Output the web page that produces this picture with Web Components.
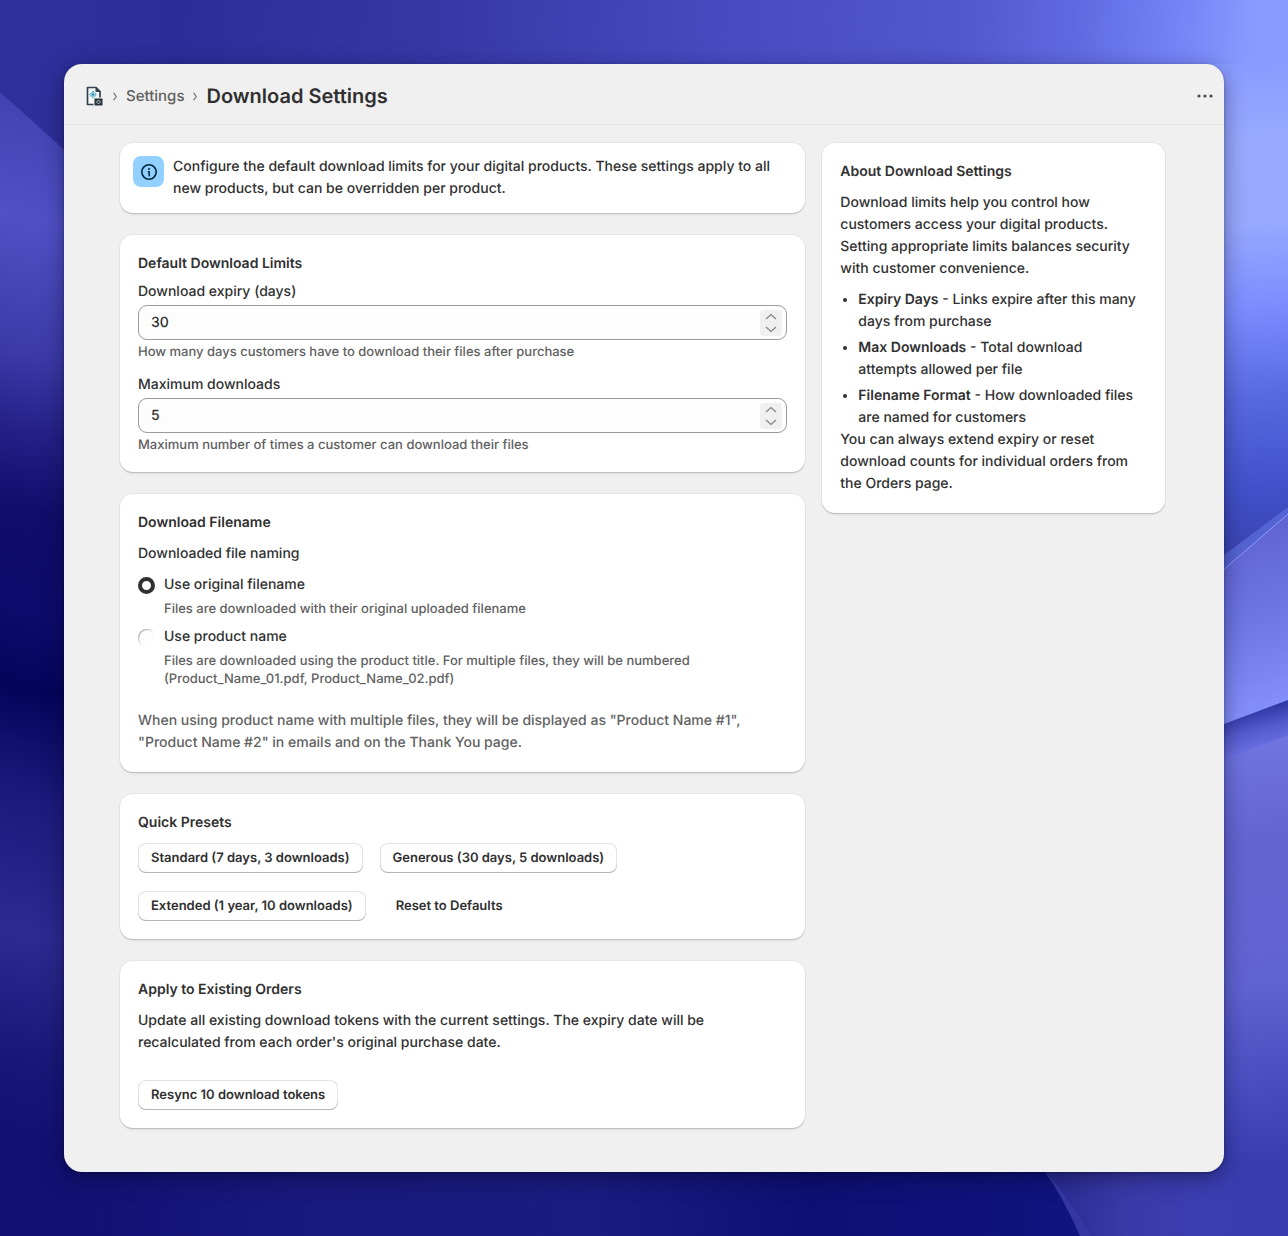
<!DOCTYPE html>
<html lang="en">
<head>
<meta charset="utf-8">
<meta name="viewport" content="width=device-width, initial-scale=1">
<title>Download Settings</title>
<style>
  body {
    margin: 0;
    color: #303030;
    font: 450 14px/22px Inter, "Liberation Sans", sans-serif;
    text-rendering: geometricPrecision;
  }

  p {
    margin: 0;
  }

  .subdued {
    color: #616161;
    margin-top: 13px;
  }

  .tips {
    margin: 0;
    padding: 0 8px 0 18px;
  }

  .tips li + li {
    margin-top: 4px;
  }

  .tips strong {
    font-weight: 600;
  }

  .tips + p {
    margin-top: -9px;
  }

  .presets {
    display: flex;
    flex-wrap: wrap;
    gap: 18px 17px;
  }

  .note {
    padding-right: 18px;
  }

  .actions {
    margin-top: 17px;
  }
</style>
</head>
<body>
<desk-top>
  <app-window>
    <page-header slot="header" data-parent="Settings" data-title="Download Settings"></page-header>

    <info-banner>Configure the default download limits for your digital products. These settings apply to all new products, but can be overridden per product.</info-banner>

    <settings-card data-heading="Default Download Limits" data-tight>
      <number-field data-label="Download expiry (days)" data-value="30" data-help="How many days customers have to download their files after purchase"></number-field>
      <number-field data-label="Maximum downloads" data-value="5" data-help="Maximum number of times a customer can download their files"></number-field>
    </settings-card>

    <settings-card data-heading="Download Filename">
      <choice-list
        data-label="Downloaded file naming"
        data-choices='[
          ["Use original filename", "Files are downloaded with their original uploaded filename"],
          ["Use product name", "Files are downloaded using the product title. For multiple files, they will be numbered (Product_Name_01.pdf, Product_Name_02.pdf)"]
        ]'></choice-list>
      <p class="subdued">When using product name with multiple files, they will be displayed as "Product Name #1", "Product Name #2" in emails and on the Thank You page.</p>
    </settings-card>

    <settings-card data-heading="Quick Presets">
      <div class="presets">
        <action-button>Standard (7 days, 3 downloads)</action-button>
        <action-button>Generous (30 days, 5 downloads)</action-button>
        <action-button>Extended (1 year, 10 downloads)</action-button>
        <action-button data-plain>Reset to Defaults</action-button>
      </div>
    </settings-card>

    <settings-card data-heading="Apply to Existing Orders">
      <p class="note">Update all existing download tokens with the current settings. The expiry date will be recalculated from each order's original purchase date.</p>
      <div class="actions">
        <action-button>Resync 10 download tokens</action-button>
      </div>
    </settings-card>

    <settings-card slot="aside" data-heading="About Download Settings">
      <p>Download limits help you control how customers access your digital products. Setting appropriate limits balances security with customer convenience.</p>
      <ul class="tips">
        <li><strong>Expiry Days</strong> - Links expire after this many days from purchase</li>
        <li><strong>Max Downloads</strong> - Total download attempts allowed per file</li>
        <li><strong>Filename Format</strong> - How downloaded files are named for customers</li>
      </ul>
      <p>You can always extend expiry or reset download counts for individual orders from the Orders page.</p>
    </settings-card>
  </app-window>
</desk-top>

<script>
const createTemplate = (html) => {
  const template = document.createElement("template");
  template.innerHTML = html;
  return template;
};

const DeskTop = (() => {
  const template = createTemplate(`
    <style>
      :host {
        display: block;
        position: relative;
        box-sizing: border-box;
        min-height: 100vh;
        padding: 64px;
        background: #2c2d98;
      }

      svg {
        position: absolute;
        inset: 0;
        width: 100%;
        height: 100%;
      }
    </style>
    <svg viewBox="0 0 1288 1236" preserveAspectRatio="none" aria-hidden="true">
      <defs>
        <linearGradient id="left" gradientUnits="userSpaceOnUse" x1="0" y1="0" x2="-260" y2="1236">
          <stop offset="0" stop-color="#3a3aa8"/>
          <stop offset=".09" stop-color="#4445b6"/>
          <stop offset=".165" stop-color="#5051c6"/>
          <stop offset=".27" stop-color="#3b3aa8"/>
          <stop offset=".33" stop-color="#242087"/>
          <stop offset=".39" stop-color="#100d6c"/>
          <stop offset=".47" stop-color="#0d0b6b"/>
          <stop offset=".53" stop-color="#04045c"/>
          <stop offset=".61" stop-color="#1a1a7c"/>
          <stop offset=".72" stop-color="#2b2b91"/>
          <stop offset=".82" stop-color="#171778"/>
          <stop offset=".88" stop-color="#111174"/>
        </linearGradient>
        <linearGradient id="top" gradientUnits="userSpaceOnUse" x1="0" y1="0" x2="1288" y2="120">
          <stop offset="0" stop-color="#2f309c"/>
          <stop offset=".14" stop-color="#2c2d98"/>
          <stop offset=".33" stop-color="#3537a5"/>
          <stop offset=".56" stop-color="#464bc1"/>
          <stop offset=".74" stop-color="#5157cd"/>
          <stop offset=".83" stop-color="#606ae0"/>
          <stop offset=".91" stop-color="#7584f7"/>
          <stop offset=".97" stop-color="#8a9bff"/>
        </linearGradient>
        <linearGradient id="right" gradientUnits="userSpaceOnUse" x1="1256" y1="64" x2="1292" y2="560">
          <stop offset="0" stop-color="#8a9bff"/>
          <stop offset=".15" stop-color="#98a9ff"/>
          <stop offset=".32" stop-color="#97a8fe"/>
          <stop offset=".49" stop-color="#7c8cff"/>
          <stop offset=".67" stop-color="#5868df"/>
          <stop offset=".86" stop-color="#4150c8"/>
          <stop offset="1" stop-color="#3942ae"/>
        </linearGradient>
        <linearGradient id="fold" gradientUnits="userSpaceOnUse" x1="1224" y1="540" x2="1288" y2="715">
          <stop offset="0" stop-color="#5f64d4"/>
          <stop offset=".5" stop-color="#6f78e6"/>
          <stop offset="1" stop-color="#8793ff"/>
        </linearGradient>
        <linearGradient id="crease" gradientUnits="userSpaceOnUse" x1="1250" y1="712" x2="1262" y2="760">
          <stop offset="0" stop-color="#3239a8"/>
          <stop offset=".4" stop-color="#555cce"/>
          <stop offset="1" stop-color="#757bec"/>
        </linearGradient>
        <linearGradient id="lower" gradientUnits="userSpaceOnUse" x1="1230" y1="740" x2="1288" y2="1220">
          <stop offset="0" stop-color="#7075e2"/>
          <stop offset=".2" stop-color="#6365d2"/>
          <stop offset=".5" stop-color="#6063d2"/>
          <stop offset=".75" stop-color="#4549bd"/>
          <stop offset=".88" stop-color="#383caf"/>
        </linearGradient>
        <linearGradient id="bottom" gradientUnits="userSpaceOnUse" x1="0" y1="0" x2="1080" y2="0">
          <stop offset=".06" stop-color="#111174"/>
          <stop offset=".3" stop-color="#191a7d"/>
          <stop offset=".55" stop-color="#191c80"/>
          <stop offset=".75" stop-color="#0d1073"/>
          <stop offset="1" stop-color="#0f147f"/>
        </linearGradient>
        <linearGradient id="corner" gradientUnits="userSpaceOnUse" x1="1060" y1="0" x2="1288" y2="0">
          <stop offset="0" stop-color="#2b2d94"/>
          <stop offset=".3" stop-color="#3a3aa9"/>
          <stop offset=".6" stop-color="#3b3eb1"/>
          <stop offset=".8" stop-color="#383caf"/>
        </linearGradient>
      </defs>
      <rect width="644" height="1236" fill="url(#left)"/>
      <path d="M0 0H1288V200H120L0 92Z" fill="url(#top)"/>
      <path d="M1200 64H1288V560H1200Z" fill="url(#right)"/>
      <path d="M1200 573L1288 507V720H1200Z" fill="#5463d3"/>
      <path d="M1200 590L1288 514V740H1200Z" fill="url(#fold)"/>
      <path d="M1200 590L1288 514" stroke="#929bff" fill="none"/>
      <path d="M1200 733L1288 700V780H1200Z" fill="url(#crease)"/>
      <path d="M1200 769L1288 735V1180H1200Z" fill="url(#lower)"/>
      <rect y="1160" width="1120" height="76" fill="url(#bottom)"/>
      <path d="M1040 1165Q1068 1196 1093 1236H1288V1160Z" fill="url(#corner)"/>
      <path d="M1040 1165Q1062 1194 1080 1236H1093Q1068 1196 1040 1165Z" fill="#3437a2"/>
    </svg>
    <slot></slot>
  `);

  return class DeskTop extends HTMLElement {
    constructor() {
      super();
      this.attachShadow({ mode: "open" });
      this.shadowRoot.appendChild(template.content.cloneNode(true));
    }
  };
})();

const AppWindow = (() => {
  const template = createTemplate(`
    <style>
      :host {
        display: block;
        position: relative;
        background: #f0f0f0;
        border-radius: 18px;
        box-shadow: 0 6px 22px rgba(0, 0, 20, 0.4), 0 1px 3px rgba(0, 0, 20, 0.3);
      }

      .content {
        display: grid;
        grid-template-columns: 2fr 1fr;
        align-items: start;
        gap: 17px;
        padding: 18px 59px 44px 56px;
      }

      main {
        display: flex;
        flex-direction: column;
        gap: 22px;
        min-width: 0;
      }

      @media (max-width: 760px) {
        .content {
          grid-template-columns: 1fr;
          padding: 18px;
        }
      }
    </style>
    <slot name="header"></slot>
    <div class="content">
      <main><slot></slot></main>
      <aside><slot name="aside"></slot></aside>
    </div>
  `);

  return class AppWindow extends HTMLElement {
    constructor() {
      super();
      this.attachShadow({ mode: "open" });
      this.shadowRoot.appendChild(template.content.cloneNode(true));
    }
  };
})();

const PageHeader = (() => {
  const template = createTemplate(`
    <style>
      :host {
        display: flex;
        align-items: center;
        justify-content: space-between;
        padding: 18px 9px 14px 20px;
        border-bottom: 1px solid #e7e7e7;
      }

      nav {
        display: flex;
        align-items: center;
        gap: 9px;
      }

      a {
        color: #616161;
        font-size: 15px;
        line-height: 28px;
        text-decoration: none;
      }

      .app {
        display: flex;
      }

      .chevron {
        display: block;
      }

      h1 {
        margin: 0;
        font-size: 20px;
        font-weight: 600;
        line-height: 28px;
      }

      button {
        display: flex;
        padding: 3px 0;
        border: 0;
        background: none;
      }
    </style>
    <nav aria-label="Breadcrumb">
      <a class="app" href="#" aria-label="App home">
        <svg width="20" height="22" viewBox="0 0 20 22">
          <path d="M3.500 2.500H12l4 4v13H3.500z" fill="#f6f9fa" stroke="#34414b" stroke-width="1.700" stroke-linejoin="round"/>
          <path d="M11.500 1.500L17 7h-5.500z" fill="#34414b"/>
          <path d="M9 6l3.600 3.600L9 13.200 5.400 9.600z" fill="#9bd0df" stroke="#57a9c1" stroke-width="1" stroke-dasharray="2 1"/>
          <circle cx="9" cy="9.600" r="1.200" fill="#348ba7"/>
          <rect x="10" y="13" width="9" height="8" fill="#26333d" stroke="#f0f0f0" stroke-width="1"/>
          <path d="M14.500 15l2 2-2 2-2-2z" fill="none" stroke="#b7c1c6"/>
        </svg>
      </a>
      <svg class="chevron" width="4" height="9" viewBox="0 0 4 9"><path d="M.6.800L3.300 4.500.6 8.200" fill="none" stroke="#707070" stroke-width="1.200"/></svg>
      <a class="parent" href="#"></a>
      <svg class="chevron" width="4" height="9" viewBox="0 0 4 9"><path d="M.6.800L3.300 4.500.6 8.200" fill="none" stroke="#707070" stroke-width="1.200"/></svg>
      <h1></h1>
    </nav>
    <button type="button" aria-label="More actions">
      <svg width="20" height="22" viewBox="0 0 20 22" fill="#4a4a4a">
        <circle cx="4" cy="11" r="1.600"/><circle cx="10" cy="11" r="1.600"/><circle cx="16" cy="11" r="1.600"/>
      </svg>
    </button>
  `);

  return class PageHeader extends HTMLElement {
    constructor() {
      super();
      this.attachShadow({ mode: "open" });
      this.shadowRoot.appendChild(template.content.cloneNode(true));
    }

    connectedCallback() {
      this.shadowRoot.querySelector(".parent").textContent = this.dataset.parent;
      this.shadowRoot.querySelector("h1").textContent = this.dataset.title;
    }
  };
})();

const cardStyle = `
  background: #fff;
  border-radius: 13px;
  box-shadow: 0 0 0 1px rgba(0, 0, 0, 0.04), 0 1px 1px rgba(0, 0, 0, 0.14), 0 3px 3px -1px rgba(0, 0, 0, 0.06);
`;

const InfoBanner = (() => {
  const template = createTemplate(`
    <style>
      :host {
        display: flex;
        align-items: flex-start;
        gap: 9px;
        padding: 13px;
        ${cardStyle}
      }

      .icon {
        display: grid;
        flex: none;
        place-items: center;
        width: 31px;
        height: 31px;
        border-radius: 8px;
        background: #91d0ff;
      }
    </style>
    <span class="icon">
      <svg width="18" height="18" viewBox="0 0 18 18" fill="none" stroke="#00283d">
        <circle cx="9" cy="9" r="7.200" stroke-width="1.600"/>
        <path d="M8.300 8.700H9.200v4" stroke-width="1.500" stroke-linecap="round" stroke-linejoin="round"/>
        <circle cx="9" cy="5.900" r="1" fill="#00283d" stroke="none"/>
      </svg>
    </span>
    <span><slot></slot></span>
  `);

  return class InfoBanner extends HTMLElement {
    constructor() {
      super();
      this.attachShadow({ mode: "open" });
      this.shadowRoot.appendChild(template.content.cloneNode(true));
    }
  };
})();

const SettingsCard = (() => {
  const template = createTemplate(`
    <style>
      :host {
        display: flex;
        flex-direction: column;
        gap: 9px;
        padding: 18px;
        ${cardStyle}
      }

      .fields {
        display: flex;
        flex-direction: column;
        gap: 9px;
      }

      :host([data-tight]) {
        gap: 6px;
      }

      :host([data-tight]) .fields {
        gap: 13px;
      }

      h2 {
        margin: 0;
        font-size: 14px;
        font-weight: 600;
        line-height: 22px;
      }
    </style>
    <h2></h2>
    <div class="fields"><slot></slot></div>
  `);

  return class SettingsCard extends HTMLElement {
    constructor() {
      super();
      this.attachShadow({ mode: "open" });
      this.shadowRoot.appendChild(template.content.cloneNode(true));
    }

    connectedCallback() {
      this.shadowRoot.querySelector("h2").textContent = this.dataset.heading;
    }
  };
})();

const NumberField = (() => {
  const template = createTemplate(`
    <style>
      :host {
        display: block;
      }

      label {
        display: block;
      }

      .box {
        display: flex;
        align-items: center;
        box-sizing: border-box;
        height: 35px;
        margin: 2px 0 3px;
        padding-right: 4px;
        border: 1px solid #9a9a9a;
        border-radius: 9px;
        background: #fdfdfd;
      }

      input {
        flex: 1;
        min-width: 0;
        padding: 0 12px;
        border: 0;
        outline: 0;
        background: none;
        color: inherit;
        font: inherit;
        text-rendering: inherit;
        appearance: textfield;
      }

      input::-webkit-inner-spin-button {
        appearance: none;
      }

      .spinner {
        display: flex;
        flex-direction: column;
        width: 22px;
        border-radius: 4px;
        background: #f0f0f0;
      }

      button {
        display: grid;
        place-items: center;
        height: 13px;
        padding: 0;
        border: 0;
        background: none;
      }

      .help {
        color: #616161;
        font-size: 13px;
        line-height: 18px;
      }
    </style>
    <label for="field"></label>
    <div class="box">
      <input id="field" type="number" min="0" aria-describedby="help">
      <div class="spinner">
        <button type="button" class="up" aria-label="Increase">
          <svg width="12" height="7" viewBox="0 0 12 7"><path d="M1 6l5-4.500L11 6" fill="none" stroke="#858585" stroke-width="1.300"/></svg>
        </button>
        <button type="button" class="down" aria-label="Decrease">
          <svg width="12" height="7" viewBox="0 0 12 7"><path d="M1 1l5 4.500L11 1" fill="none" stroke="#858585" stroke-width="1.300"/></svg>
        </button>
      </div>
    </div>
    <div class="help" id="help"></div>
  `);

  return class NumberField extends HTMLElement {
    constructor() {
      super();
      this.attachShadow({ mode: "open" });
      this.shadowRoot.appendChild(template.content.cloneNode(true));
      this.input = this.shadowRoot.querySelector("input");
      this.shadowRoot
        .querySelector(".up")
        .addEventListener("click", () => this.input.stepUp());
      this.shadowRoot
        .querySelector(".down")
        .addEventListener("click", () => this.input.stepDown());
    }

    connectedCallback() {
      this.input.value = this.dataset.value;
      this.shadowRoot.querySelector("label").textContent = this.dataset.label;
      this.shadowRoot.querySelector(".help").textContent = this.dataset.help;
    }
  };
})();

const ChoiceList = (() => {
  const template = createTemplate(`
    <style>
      :host {
        display: block;
      }

      fieldset {
        margin: 0;
        padding: 0;
        border: 0;
      }

      legend {
        padding: 0;
        margin-bottom: 9px;
      }

      .choice + .choice {
        margin-top: 8px;
      }

      label {
        display: flex;
        align-items: center;
        gap: 9px;
      }

      input {
        appearance: none;
        box-sizing: border-box;
        width: 17px;
        height: 17px;
        margin: 0;
        border-radius: 50%;
        background: #fdfdfd;
        box-shadow: inset 1px 1px 1px #b4b4b4;
      }

      input:checked {
        border: 4px solid #303030;
        background: #fff;
        box-shadow: none;
      }

      .help {
        margin: 4px 0 0 26px;
        color: #616161;
        font-size: 13px;
        line-height: 18px;
      }
    </style>
    <fieldset><legend></legend></fieldset>
  `);

  return class ChoiceList extends HTMLElement {
    constructor() {
      super();
      this.attachShadow({ mode: "open" });
      this.shadowRoot.appendChild(template.content.cloneNode(true));
      this.choices = JSON.parse(this.getAttribute("data-choices") ?? "[]");
    }

    connectedCallback() {
      this.shadowRoot.querySelector("legend").textContent = this.dataset.label;
      const fieldset = this.shadowRoot.querySelector("fieldset");
      this.choices.forEach(([label, help], i) => {
        const choice = document.createElement("div");
        choice.className = "choice";
        choice.innerHTML = `
          <label><input type="radio" name="choice" aria-describedby="help-${i}" ${i === 0 ? "checked" : ""}>${label}</label>
          <div class="help" id="help-${i}">${help}</div>
        `;
        fieldset.appendChild(choice);
      });
    }
  };
})();

const ActionButton = (() => {
  const template = createTemplate(`
    <style>
      :host {
        display: inline-flex;
        vertical-align: top;
      }

      button {
        height: 30px;
        padding: 0 13px;
        border: 0;
        border-radius: 8px;
        background: #fff;
        color: inherit;
        font: 600 13px/18px Inter, "Liberation Sans", sans-serif;
        text-rendering: inherit;
        box-shadow: inset 0 -1px 0 #b5b5b5, inset 0 0 0 1px #e3e3e3;
      }

      :host([data-plain]) button {
        background: none;
        box-shadow: none;
      }
    </style>
    <button type="button"><slot></slot></button>
  `);

  return class ActionButton extends HTMLElement {
    constructor() {
      super();
      this.attachShadow({ mode: "open" });
      this.shadowRoot.appendChild(template.content.cloneNode(true));
    }
  };
})();

window.customElements.define("desk-top", DeskTop);
window.customElements.define("app-window", AppWindow);
window.customElements.define("page-header", PageHeader);
window.customElements.define("info-banner", InfoBanner);
window.customElements.define("settings-card", SettingsCard);
window.customElements.define("number-field", NumberField);
window.customElements.define("choice-list", ChoiceList);
window.customElements.define("action-button", ActionButton);
</script>
</body>
</html>
